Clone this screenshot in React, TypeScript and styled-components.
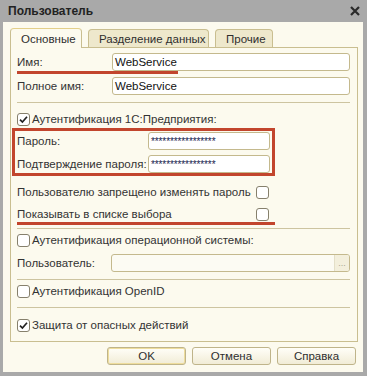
import { createGlobalStyle, styled } from "styled-components";

const GlobalStyle = createGlobalStyle`
  html, body {
    margin: 0;
    padding: 0;
    background: #ffffff;
  }
  body {
    font-family: "Liberation Sans", Arial, sans-serif;
    font-size: 11.5px;
    color: #333333;
  }
`;

const RED = "#c2452d";

const Window = styled.div`
  width: 367px;
  height: 376px;
  box-sizing: border-box;
  background: #a9a9a9;
  padding: 0 4px 4px 3px;
  display: flex;
  flex-direction: column;
`;

const TitleBar = styled.div`
  height: 22px;
  flex: none;
  display: flex;
  align-items: center;
  justify-content: space-between;
  padding: 0 3px 0 5px;
  font-size: 12px;
  font-weight: bold;
  color: #222222;
`;

const CloseIcon = styled.svg`
  width: 10px;
  height: 10px;
  display: block;
`;

const Body = styled.div`
  flex: 1;
  background: #fcfaee;
  padding: 6px 5px 0 7px;
  display: flex;
  flex-direction: column;
`;

const TabBar = styled.div`
  height: 19px;
  display: flex;
  align-items: flex-end;
  gap: 6px;
  position: relative;
  z-index: 1;
`;

const Tab = styled.div<{ $active?: boolean; $width: number }>`
  box-sizing: border-box;
  width: ${(p) => p.$width}px;
  height: ${(p) => (p.$active ? 20 : 18)}px;
  margin-bottom: ${(p) => (p.$active ? -1 : 0)}px;
  padding-left: 10px;
  display: flex;
  align-items: center;
  white-space: nowrap;
  border: 1px solid #c9be90;
  border-bottom: none;
  border-top-color: ${(p) => (p.$active ? "#e3cf8a" : "#c9be90")};
  border-radius: 4px 4px 0 0;
  background: ${(p) => (p.$active ? "#fcfaee" : "#eee8cc")};
  color: #2e2e2e;
`;

const Panel = styled.div`
  box-sizing: border-box;
  height: 295px;
  border: 1px solid #c9be90;
  background: #fcfaee;
  padding: 0 7px 0 6px;
  display: flex;
  flex-direction: column;
`;

const Row = styled.div<{ $top: number; $height?: number; $mark?: number; $markGap?: number }>`
  position: relative;
  display: flex;
  align-items: center;
  flex: none;
  white-space: nowrap;
  height: ${(p) => p.$height ?? 18}px;
  margin-top: ${(p) => p.$top}px;

  ${(p) =>
    p.$mark
      ? `&::after {
          content: "";
          position: absolute;
          left: 0;
          top: calc(100% + ${p.$markGap ?? 0}px);
          width: ${p.$mark}px;
          height: 3px;
          background: ${RED};
        }`
      : ""}
`;

const Label = styled.span<{ $width: number }>`
  flex: none;
  width: ${(p) => p.$width}px;
  white-space: nowrap;
`;

const TextField = styled.div<{ $width: number; $disabled?: boolean }>`
  box-sizing: border-box;
  width: ${(p) => p.$width}px;
  height: 18px;
  border: 1px solid #c4b98d;
  border-radius: 3px;
  background: ${(p) => (p.$disabled ? "#fcfbf3" : "#ffffff")};
  padding-left: 2px;
  display: flex;
  align-items: center;
  color: #111111;
  overflow: hidden;
`;

const Stars = styled.span`
  font-size: 10px;
  letter-spacing: -0.1px;
  color: #16224e;
  line-height: 1;
  padding-top: 2px;
`;

const Choose = styled.span`
  margin-left: auto;
  width: 15px;
  height: 100%;
  border-left: 1px solid #e4dfc8;
  background: #f3efdc;
  color: #a9a493;
  font-size: 9px;
  display: flex;
  align-items: flex-end;
  justify-content: center;
  padding-bottom: 3px;
  box-sizing: border-box;
`;

const Separator = styled.div<{ $top: number }>`
  flex: none;
  height: 1px;
  margin-top: ${(p) => p.$top}px;
  background: #cdc4a0;
`;

const CheckBox = styled.span`
  box-sizing: border-box;
  flex: none;
  width: 13px;
  height: 13px;
  border: 1px solid #86806c;
  border-radius: 3px;
  background: #ffffff;
  display: flex;
  align-items: center;
  justify-content: center;
  margin-right: 2px;
`;

const Highlight = styled.div`
  box-sizing: border-box;
  flex: none;
  width: 263px;
  height: 48px;
  margin: 2px 0 0 -5px;
  border: 3px solid ${RED};
  padding: 1px 2px 0 2px;
  display: flex;
  flex-direction: column;
  gap: 5px;
`;

const HighlightRow = styled.div`
  display: flex;
  align-items: center;
  height: 18px;
`;

const Buttons = styled.div`
  display: flex;
  justify-content: flex-end;
  gap: 6px;
  margin: 5px 2px 0 0;
`;

const Button = styled.div<{ $default?: boolean }>`
  box-sizing: border-box;
  width: 79px;
  height: 18px;
  border: 1px solid #bfb48a;
  border-radius: 3px;
  background: linear-gradient(#fffef8, #f1ecd6);
  box-shadow: ${(p) => (p.$default ? "inset 0 0 0 1px #eedd9c" : "none")};
  display: flex;
  align-items: center;
  justify-content: center;
  color: #2e2e2e;
`;

function Check({ checked }: { checked?: boolean }) {
  return (
    <CheckBox>
      {checked && (
        <svg width="11" height="11" viewBox="0 0 11 11">
          <path d="M2 5.6 L4.4 8 L9 2.8" fill="none" stroke="#222" strokeWidth="1.7" />
        </svg>
      )}
    </CheckBox>
  );
}

const STARS = "*****************";

export default function App() {
  return (
    <>
      <GlobalStyle />
      <Window>
        <TitleBar>
          <span>Пользователь</span>
          <CloseIcon viewBox="0 0 10 10">
            <path d="M1 1 L9 9 M9 1 L1 9" stroke="#2a2a2a" strokeWidth="2.2" />
          </CloseIcon>
        </TitleBar>
        <Body>
          <TabBar>
            <Tab $active $width={72}>Основные</Tab>
            <Tab $width={121}>Разделение данных</Tab>
            <Tab $width={58}>Прочие</Tab>
          </TabBar>
          <Panel>
            <Row $top={5} $mark={161}>
              <Label $width={95}>Имя:</Label>
              <TextField $width={238}>WebService</TextField>
            </Row>
            <Row $top={6}>
              <Label $width={95}>Полное имя:</Label>
              <TextField $width={238}>WebService</TextField>
            </Row>
            <Separator $top={7} />
            <Row $top={9} $height={14}>
              <Check checked />
              <span>Аутентификация 1С:Предприятия:</span>
            </Row>
            <Highlight>
              <HighlightRow>
                <Label $width={131}>Пароль:</Label>
                <TextField $width={122}>
                  <Stars>{STARS}</Stars>
                </TextField>
              </HighlightRow>
              <HighlightRow>
                <Label $width={131}>Подтверждение пароля:</Label>
                <TextField $width={122}>
                  <Stars>{STARS}</Stars>
                </TextField>
              </HighlightRow>
            </Highlight>
            <Row $top={9} $height={14}>
              <Label $width={239}>Пользователю запрещено изменять пароль</Label>
              <Check />
            </Row>
            <Row $top={8} $height={14} $mark={258} $markGap={1}>
              <Label $width={239}>Показывать в списке выбора</Label>
              <Check />
            </Row>
            <Separator $top={7} />
            <Row $top={4} $height={14}>
              <Check />
              <span>Аутентификация операционной системы:</span>
            </Row>
            <Row $top={7}>
              <Label $width={94}>Пользователь:</Label>
              <TextField $width={239} $disabled>
                <Choose>...</Choose>
              </TextField>
            </Row>
            <Separator $top={7} />
            <Row $top={4} $height={14}>
              <Check />
              <span>Аутентификация OpenID</span>
            </Row>
            <Separator $top={9} />
            <Row $top={10} $height={14}>
              <Check checked />
              <span>Защита от опасных действий</span>
            </Row>
          </Panel>
          <Buttons>
            <Button $default>OK</Button>
            <Button>Отмена</Button>
            <Button>Справка</Button>
          </Buttons>
        </Body>
      </Window>
    </>
  );
}
